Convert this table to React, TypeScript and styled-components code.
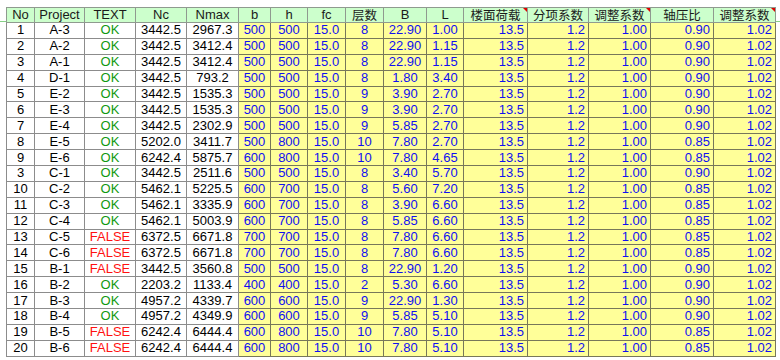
import React from 'react';
import styled, { createGlobalStyle, css } from 'styled-components';

const GlobalStyle = createGlobalStyle`
  html, body { margin: 0; padding: 0; background: #ffffff; }
  body { font-family: "Liberation Sans", Arial, "Noto Sans CJK SC", sans-serif; }
`;

const Sheet = styled.div`
  position: relative;
  width: 780px;
  height: 360px;
  box-sizing: border-box;
  padding: 7px 0 0 6px;
  overflow: hidden;
`;

const FreezeLine = styled.div`
  position: absolute;
  left: 0;
  right: 0;
  top: 21px;
  height: 1px;
  background: #86d186;
`;

const Table = styled.table`
  position: relative;
  border-collapse: collapse;
  table-layout: fixed;
  width: 769px;
  font-size: 13px;
  color: #000;
`;

const HeadCell = styled.th<{ $note?: boolean; $cjk?: boolean }>`
  position: relative;
  height: 14px;
  padding: 0;
  line-height: 14px;
  background: #ccffcc;
  border: 1px solid #8f9a8f;
  font-weight: normal;
  text-align: center;
  white-space: nowrap;
  color: #1a1a1a;
  font-size: ${(p) => (p.$cjk ? '12.5px' : '13px')};
  font-family: ${(p) => (p.$cjk ? '"Noto Sans CJK SC", "Liberation Sans", sans-serif' : '"Liberation Sans", Arial, sans-serif')};
  ${(p) =>
    p.$note &&
    css`
      &::after {
        content: '';
        position: absolute;
        top: 0;
        right: 0;
        border-style: solid;
        border-width: 0 4px 4px 0;
        border-color: transparent #e00000 transparent transparent;
      }
    `}
`;

const HeadText = styled.span`
  display: block;
  height: 14px;
  line-height: 14px;
`;

type Kind = 'plain' | 'status' | 'input';

const Cell = styled.td<{ $kind: Kind; $right?: boolean; $ok?: boolean }>`
  height: 14.9px;
  padding: 0 ${(p) => (p.$right ? '3px' : '0')} 0 0;
  line-height: 14px;
  white-space: nowrap;
  text-align: ${(p) => (p.$right ? 'right' : 'center')};
  ${(p) =>
    p.$kind === 'input'
      ? css`
          background: #ffff99;
          color: #1010f0;
          border: 1px solid #77775a;
        `
      : css`
          background: #ffffff;
          color: ${p.$kind === 'status' ? (p.$ok ? '#119911' : '#ff1111') : '#000000'};
          border: 1px solid #8c8c8c;
        `}
`;

const widths = [28, 50, 51, 51, 52, 32, 37, 38, 38, 43, 37, 64, 61, 62, 63, 62];

const headers: { label: string; cjk?: boolean; note?: boolean }[] = [
  { label: 'No' },
  { label: 'Project' },
  { label: 'TEXT' },
  { label: 'Nc' },
  { label: 'Nmax' },
  { label: 'b' },
  { label: 'h' },
  { label: 'fc' },
  { label: '层数', cjk: true },
  { label: 'B' },
  { label: 'L' },
  { label: '楼面荷载', cjk: true, note: true },
  { label: '分项系数', cjk: true },
  { label: '调整系数', cjk: true, note: true },
  { label: '轴压比', cjk: true },
  { label: '调整系数', cjk: true, note: true },
];

// No, Project, TEXT, Nc, Nmax, b, h, 层数, B, L, 轴压比  (fc, 楼面荷载, 分项系数, 调整系数 fixed)
const rows: [string, string, string, string, string, string, string, string, string, string, string][] = [
  ['1', 'A-3', 'OK', '3442.5', '2967.3', '500', '500', '8', '22.90', '1.00', '0.90'],
  ['2', 'A-2', 'OK', '3442.5', '3412.4', '500', '500', '8', '22.90', '1.15', '0.90'],
  ['3', 'A-1', 'OK', '3442.5', '3412.4', '500', '500', '8', '22.90', '1.15', '0.90'],
  ['4', 'D-1', 'OK', '3442.5', '793.2', '500', '500', '8', '1.80', '3.40', '0.90'],
  ['5', 'E-2', 'OK', '3442.5', '1535.3', '500', '500', '9', '3.90', '2.70', '0.90'],
  ['6', 'E-3', 'OK', '3442.5', '1535.3', '500', '500', '9', '3.90', '2.70', '0.90'],
  ['7', 'E-4', 'OK', '3442.5', '2302.9', '500', '500', '9', '5.85', '2.70', '0.90'],
  ['8', 'E-5', 'OK', '5202.0', '3411.7', '500', '800', '10', '7.80', '2.70', '0.85'],
  ['9', 'E-6', 'OK', '6242.4', '5875.7', '600', '800', '10', '7.80', '4.65', '0.85'],
  ['3', 'C-1', 'OK', '3442.5', '2511.6', '500', '500', '8', '3.40', '5.70', '0.90'],
  ['10', 'C-2', 'OK', '5462.1', '5225.5', '600', '700', '8', '5.60', '7.20', '0.85'],
  ['11', 'C-3', 'OK', '5462.1', '3335.9', '600', '700', '8', '3.90', '6.60', '0.85'],
  ['12', 'C-4', 'OK', '5462.1', '5003.9', '600', '700', '8', '5.85', '6.60', '0.85'],
  ['13', 'C-5', 'FALSE', '6372.5', '6671.8', '700', '700', '8', '7.80', '6.60', '0.85'],
  ['14', 'C-6', 'FALSE', '6372.5', '6671.8', '700', '700', '8', '7.80', '6.60', '0.85'],
  ['15', 'B-1', 'FALSE', '3442.5', '3560.8', '500', '500', '8', '22.90', '1.20', '0.90'],
  ['16', 'B-2', 'OK', '2203.2', '1133.4', '400', '400', '2', '5.30', '6.60', '0.90'],
  ['17', 'B-3', 'OK', '4957.2', '4339.7', '600', '600', '9', '22.90', '1.30', '0.90'],
  ['18', 'B-4', 'OK', '4957.2', '4349.9', '600', '600', '9', '5.85', '5.10', '0.90'],
  ['19', 'B-5', 'FALSE', '6242.4', '6444.4', '600', '800', '10', '7.80', '5.10', '0.85'],
  ['20', 'B-6', 'FALSE', '6242.4', '6444.4', '600', '800', '10', '7.80', '5.10', '0.85'],
];

export default function App() {
  return (
    <>
      <GlobalStyle />
      <Sheet>
        <FreezeLine />
        <Table>
          <colgroup>
            {widths.map((w, i) => (
              <col key={i} style={{ width: w }} />
            ))}
          </colgroup>
          <thead>
            <tr>
              {headers.map((h, i) => (
                <HeadCell key={i} $cjk={h.cjk} $note={h.note}>
                  <HeadText>{h.label}</HeadText>
                </HeadCell>
              ))}
            </tr>
          </thead>
          <tbody>
            {rows.map((r, i) => {
              const [no, proj, text, nc, nmax, b, h, floors, bigB, l, ratio] = r;
              return (
                <tr key={i}>
                  <Cell $kind="plain">{no}</Cell>
                  <Cell $kind="plain">{proj}</Cell>
                  <Cell $kind="status" $ok={text === 'OK'}>
                    {text}
                  </Cell>
                  <Cell $kind="plain">{nc}</Cell>
                  <Cell $kind="plain">{nmax}</Cell>
                  <Cell $kind="input">{b}</Cell>
                  <Cell $kind="input">{h}</Cell>
                  <Cell $kind="input">15.0</Cell>
                  <Cell $kind="input">{floors}</Cell>
                  <Cell $kind="input">{bigB}</Cell>
                  <Cell $kind="input">{l}</Cell>
                  <Cell $kind="input" $right>
                    13.5
                  </Cell>
                  <Cell $kind="input" $right>
                    1.2
                  </Cell>
                  <Cell $kind="input" $right>
                    1.00
                  </Cell>
                  <Cell $kind="input" $right>
                    {ratio}
                  </Cell>
                  <Cell $kind="input" $right>
                    1.02
                  </Cell>
                </tr>
              );
            })}
          </tbody>
        </Table>
      </Sheet>
    </>
  );
}
